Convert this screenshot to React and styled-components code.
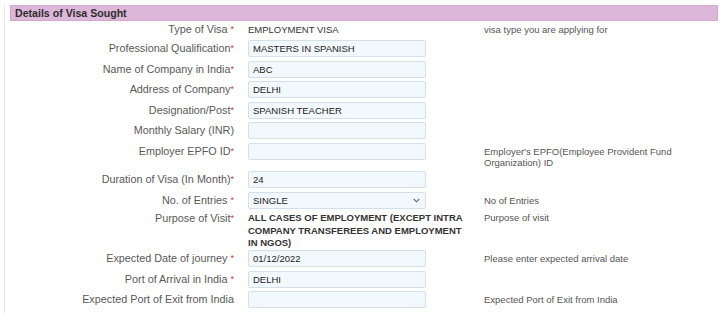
import React from "react";
import styled, { createGlobalStyle } from "styled-components";

const GlobalStyle = createGlobalStyle`
  html, body {
    margin: 0;
    padding: 0;
    background: #ffffff;
  }
  body {
    font-family: "Liberation Sans", Arial, Helvetica, sans-serif;
  }
`;

const Page = styled.div`
  width: 720px;
  height: 313px;
  overflow: hidden;
  box-sizing: border-box;
  padding: 5px 2px 0 4px;
`;

const Panel = styled.div`
  border-left: 1px solid #e6e6e6;
  padding-left: 5px;
  height: 100%;
`;

const Header = styled.div`
  height: 16px;
  box-sizing: border-box;
  background: #dcb7d9;
  border: 1px solid #d3aacf;
  padding-left: 4px;
  font-size: 10.6px;
  font-weight: bold;
  line-height: 14px;
  color: #2e2e2e;
`;

const Form = styled.div`
  display: grid;
  grid-template-columns: 224px 222px 1fr;
  column-gap: 14px;
  row-gap: 3.5px;
  padding-top: 0.5px;
  align-items: start;
`;

const Label = styled.div`
  text-align: right;
  font-size: 10.8px;
  line-height: ${(p) => p.$lh || 17}px;
  color: #585858;
  white-space: nowrap;
`;

const Star = styled.span`
  color: #b2433f;
  font-size: 9px;
  margin-left: ${(p) => (p.$spaced ? 3 : 0)}px;
  vertical-align: 1px;
`;

const Value = styled.div`
  font-size: 9.5px;
  line-height: ${(p) => p.$lh || 17}px;
  color: #333;
  font-weight: ${(p) => (p.$bold ? "bold" : "normal")};
  margin-bottom: ${(p) => (p.$bold ? -3 : 0)}px;
`;

const Field = styled.input`
  display: block;
  width: 178px;
  height: 17px;
  box-sizing: border-box;
  border: 1px solid #d3e0ea;
  border-radius: 2px;
  background: #f2f8fc;
  padding: 0 4px;
  font-family: "Liberation Sans", Arial, sans-serif;
  font-size: 9.5px;
  color: #222;
  outline: none;
`;

const SelectWrap = styled.div`
  position: relative;
  width: 178px;
`;

const Select = styled.select`
  display: block;
  width: 178px;
  height: 17px;
  box-sizing: border-box;
  border: 1px solid #d3e0ea;
  border-radius: 2px;
  background: #f2f8fc;
  padding: 0 4px;
  appearance: none;
  font-family: "Liberation Sans", Arial, sans-serif;
  font-size: 9.5px;
  color: #222;
  outline: none;
`;

const Chevron = styled.svg`
  position: absolute;
  right: 6px;
  top: 6px;
  pointer-events: none;
`;

const Help = styled.div`
  font-size: 9.5px;
  line-height: ${(p) => p.$lh || 17}px;
  padding-top: ${(p) => p.$pt || 0}px;
  color: #555;
  padding-right: 40px;
`;

const rows = [
  { label: "Type of Visa", star: "sp", text: "EMPLOYMENT VISA", help: "visa type you are applying for", lh: 15 },
  { label: "Professional Qualification", star: "tight", input: "MASTERS IN SPANISH" },
  { label: "Name of Company in India", star: "tight", input: "ABC" },
  { label: "Address of Company", star: "tight", input: "DELHI" },
  { label: "Designation/Post", star: "tight", input: "SPANISH TEACHER" },
  { label: "Monthly Salary (INR)", input: "" },
  {
    label: "Employer EPFO ID",
    star: "tight",
    input: "",
    help: "Employer's EPFO(Employee Provident Fund Organization) ID",
    helpLh: 11,
    helpPt: 3,
  },
  { label: "Duration of Visa (In Month)", star: "tight", input: "24" },
  { label: "No. of Entries", star: "sp", select: "SINGLE", help: "No of Entries" },
  {
    label: "Purpose of Visit",
    star: "tight",
    bold: "ALL CASES OF EMPLOYMENT (EXCEPT INTRA COMPANY TRANSFEREES AND EMPLOYMENT IN NGOS)",
    help: "Purpose of visit",
    lh: 12.5,
  },
  { label: "Expected Date of journey", star: "sp", input: "01/12/2022", help: "Please enter expected arrival date" },
  { label: "Port of Arrival in India", star: "sp", input: "DELHI" },
  { label: "Expected Port of Exit from India", input: "", help: "Expected Port of Exit from India" },
];

const renderValue = (row) => {
  if (row.select !== undefined) {
    return (
      <SelectWrap>
        <Select defaultValue={row.select}>
          <option>{row.select}</option>
          <option>MULTIPLE</option>
        </Select>
        <Chevron width="7" height="5" viewBox="0 0 7 5">
          <path d="M0.8 1 L3.5 3.8 L6.2 1" fill="none" stroke="#666" strokeWidth="1.1" />
        </Chevron>
      </SelectWrap>
    );
  }
  if (row.input !== undefined) {
    return <Field defaultValue={row.input} readOnly />;
  }
  if (row.bold) {
    return (
      <Value $bold $lh={row.lh}>
        {row.bold}
      </Value>
    );
  }
  return <Value $lh={row.lh}>{row.text}</Value>;
};

const App = () => {
  return (
    <>
      <GlobalStyle />
      <Page>
        <Panel>
          <Header>Details of Visa Sought</Header>
          <Form>
            {rows.map((row) => (
              <React.Fragment key={row.label}>
                <Label $lh={row.lh}>
                  {row.label}
                  {row.star && <Star $spaced={row.star === "sp"}>*</Star>}
                </Label>
                {renderValue(row)}
                <Help $lh={row.helpLh || row.lh} $pt={row.helpPt}>
                  {row.help || ""}
                </Help>
              </React.Fragment>
            ))}
          </Form>
        </Panel>
      </Page>
    </>
  );
};

export default App;
